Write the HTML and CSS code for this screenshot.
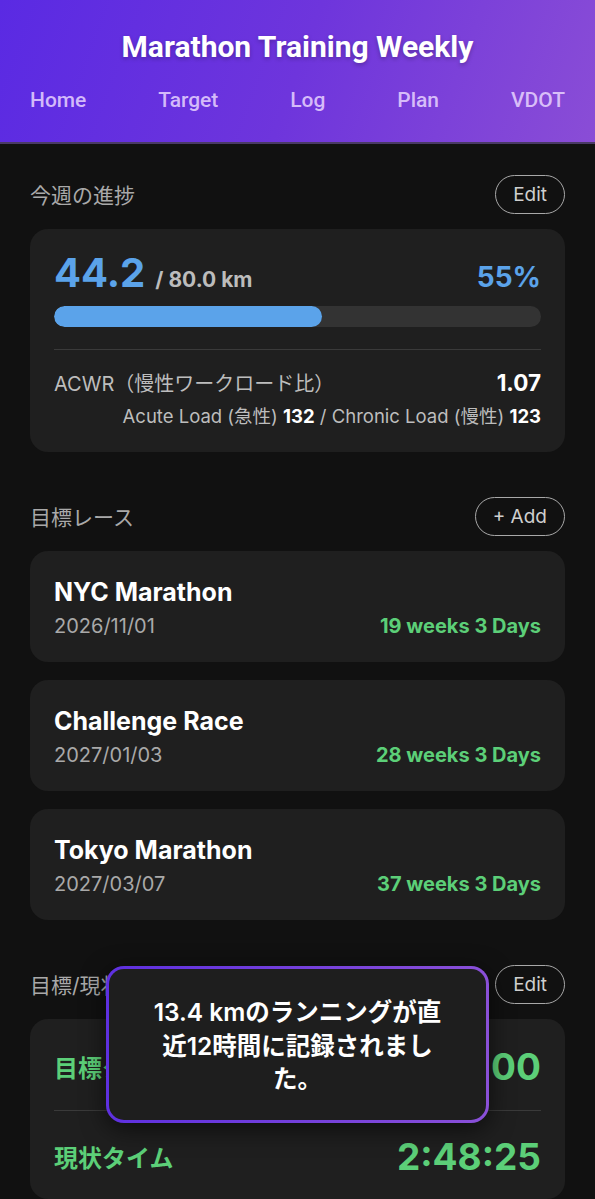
FILE: index.html
```html
<!DOCTYPE html>
<html lang="ja">
<head>
<meta charset="utf-8">
<title>Marathon Training Weekly</title>
<link rel="stylesheet" href="styles.css">
</head>
<body>
<header class="header">
  <h1 class="title">Marathon Training Weekly</h1>
  <nav class="nav">
    <a>Home</a><a>Target</a><a>Log</a><a>Plan</a><a>VDOT</a>
  </nav>
</header>
<main class="main">
  <section class="section">
    <div class="sec-head">
      <h2 class="sec-title">今週の進捗</h2>
      <button class="pill">Edit</button>
    </div>
    <div class="card progress-card">
      <div class="dist-row">
        <div class="dist"><span class="dist-val">44.2</span><span class="dist-goal">/ 80.0 km</span></div>
        <div class="pct">55%</div>
      </div>
      <div class="bar"><div class="bar-fill" style="width:55%"></div></div>
      <div class="divider"></div>
      <div class="acwr-row">
        <span class="acwr-label">ACWR（慢性ワークロード比）</span>
        <span class="acwr-val">1.07</span>
      </div>
      <div class="load-row">Acute Load (急性) <b>132</b> / Chronic Load (慢性) <b>123</b></div>
    </div>
  </section>

  <section class="section">
    <div class="sec-head">
      <h2 class="sec-title">目標レース</h2>
      <button class="pill">+ Add</button>
    </div>
    <div class="race-list">
      <div class="card race">
        <div class="race-name">NYC Marathon</div>
        <div class="race-row"><span class="race-date">2026/11/01</span><span class="race-left">19 weeks 3 Days</span></div>
      </div>
      <div class="card race">
        <div class="race-name">Challenge Race</div>
        <div class="race-row"><span class="race-date">2027/01/03</span><span class="race-left">28 weeks 3 Days</span></div>
      </div>
      <div class="card race">
        <div class="race-name">Tokyo Marathon</div>
        <div class="race-row"><span class="race-date">2027/03/07</span><span class="race-left">37 weeks 3 Days</span></div>
      </div>
    </div>
  </section>

  <section class="section">
    <div class="sec-head">
      <h2 class="sec-title">目標/現状タイム</h2>
      <button class="pill">Edit</button>
    </div>
    <div class="card time-card">
      <div class="time-row"><span class="time-label">目標タイム</span><span class="time-val">2:45:00</span></div>
      <div class="divider"></div>
      <div class="time-row"><span class="time-label">現状タイム</span><span class="time-val">2:48:25</span></div>
    </div>
  </section>
</main>
<div class="toast">13.4 kmのランニングが直近12時間に記録されました。</div>
</body>
</html>
```
FILE: styles.css
```css
* { box-sizing: border-box; }
html, body { margin: 0; padding: 0; }
body {
  background: #111111;
  color: #fff;
  font-family: Inter, "Noto Sans CJK JP", sans-serif;
  width: 595px;
  height: 1199px;
  overflow: hidden;
  position: relative;
}
.header {
  height: 144px;
  background: linear-gradient(110deg, #5a2ae3 0%, #6e35dc 50%, #8a4dd6 100%);
  border-bottom: 2px solid #4a3a66;
  padding-top: 28px;
}
.title {
  margin: 0;
  text-align: center;
  font-family: Roboto, sans-serif;
  font-weight: 700;
  font-size: 30px;
  line-height: 38px;
  color: #fff;
  text-shadow: 0 2px 4px rgba(0,0,0,0.25);
}
.nav {
  display: flex;
  justify-content: space-between;
  padding: 0 30px;
  margin-top: 18px;
}
.nav a {
  font-family: Roboto, sans-serif;
  font-size: 21px;
  font-weight: 500;
  line-height: 32px;
  color: rgba(232, 212, 255, 0.85);
}
.main { padding: 31px 30px 0; }
.section { margin-bottom: 45px; }
.sec-head {
  display: flex;
  justify-content: space-between;
  align-items: center;
  height: 38px;
  margin-bottom: 16px;
}
.sec-title {
  margin: 0;
  font-size: 21px;
  font-weight: 400;
  color: #a9a9a9;
}
.pill {
  height: 39px;
  padding: 0 17px;
  border: 1.5px solid #a8a8a8;
  border-radius: 20px;
  background: transparent;
  color: #cfcfcf;
  font-family: Inter, sans-serif;
  font-size: 19px;
}
.card {
  background: #1f1f1f;
  border-radius: 18px;
  padding: 0 24px;
}
.progress-card { padding-top: 21px; padding-bottom: 24px; }
.dist-row {
  display: flex;
  justify-content: space-between;
  align-items: baseline;
}
.dist-val {
  font-size: 40px;
  font-weight: 700;
  color: #5ba3ea;
  line-height: 46px;
  margin-right: 10px;
}
.dist-goal { font-size: 21px; font-weight: 700; color: #bcbcbc; }
.pct { font-size: 28px; font-weight: 700; color: #5ba3ea; }
.bar {
  margin-top: 10px;
  height: 21px;
  border-radius: 11px;
  background: #333333;
  overflow: hidden;
}
.bar-fill { height: 100%; background: #5ba3ea; border-radius: 11px; }
.divider { height: 1px; background: #3a3a3a; margin: 22px 0 18px; }
.acwr-row {
  display: flex;
  justify-content: space-between;
  align-items: baseline;
}
.acwr-label { font-size: 20px; color: #bdbdbd; }
.acwr-val { font-size: 22.5px; font-weight: 700; color: #fff; }
.load-row {
  text-align: right;
  font-size: 18.5px;
  color: #bdbdbd;
  margin-top: 5px;
}
.load-row b { color: #fff; font-weight: 700; }
.race-list { display: flex; flex-direction: column; gap: 18px; }
.race { height: 111px; padding-top: 25px; }
.race-name { font-size: 25px; font-weight: 700; color: #fff; line-height: 32px; }
.race-row {
  display: flex;
  justify-content: space-between;
  align-items: baseline;
  margin-top: 6px;
}
.race-date { font-size: 20px; color: #a9a9a9; }
.race-left { font-size: 20px; font-weight: 700; color: #5ccf78; }
.time-card { padding-top: 24px; padding-bottom: 20px; }
.time-row {
  display: flex;
  justify-content: space-between;
  align-items: center;
  height: 46px;
}
.time-label { font-size: 24px; font-weight: 700; color: #5ccf78; }
.time-val { font-size: 37px; font-weight: 700; color: #5ccf78; }
.time-card .divider { margin: 21px 0 22px; }
.toast {
  position: absolute;
  left: 106px;
  top: 966px;
  width: 383px;
  height: 157px;
  border: 3px solid transparent;
  border-radius: 18px;
  background:
    linear-gradient(#1e1e1e, #1e1e1e) padding-box,
    linear-gradient(90deg, #5e30e0, #8a50d8) border-box;
  box-shadow: 0 6px 24px rgba(0,0,0,0.6);
  padding: 27px 42px 0;
  text-align: center;
  font-size: 24.5px;
  font-weight: 600;
  line-height: 33.5px;
  color: #fff;
}
```
